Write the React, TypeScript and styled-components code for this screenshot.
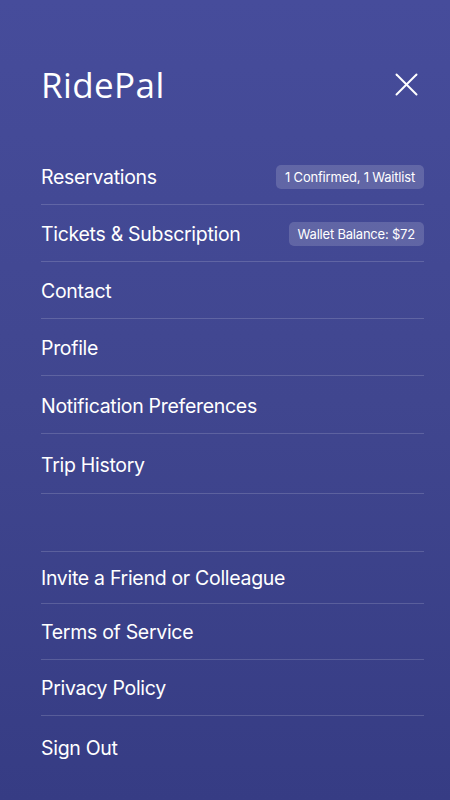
import React from "react";
import styled, { createGlobalStyle } from "styled-components";

const GlobalStyle = createGlobalStyle`
  html, body { margin: 0; padding: 0; }
  body { font-family: Inter, "Noto Sans", sans-serif; -webkit-font-smoothing: antialiased; }
`;

const Page = styled.div`
  width: 450px;
  min-height: 800px;
  box-sizing: border-box;
  padding: 62px 26px 0 41px;
  background: linear-gradient(180deg, #464c9b 0%, #40468f 50%, #363c84 100%);
  color: #fff;
  display: flex;
  flex-direction: column;
`;

const Header = styled.header`
  height: 44px;
  display: flex;
  align-items: center;
  justify-content: space-between;
  margin-bottom: 42px;
`;

const Title = styled.h1`
  margin: 0;
  font-family: "Open Sans", Roboto, sans-serif;
  font-weight: 400;
  font-size: 35px;
  letter-spacing: 0.4px;
  line-height: 1;
`;

const CloseButton = styled.button`
  width: 30px;
  height: 30px;
  margin-right: 3px;
  padding: 0;
  border: 0;
  background: none;
  color: #fff;
  display: flex;
  align-items: center;
  justify-content: center;
`;

const Menu = styled.nav`
  display: flex;
  flex-direction: column;
`;

const Row = styled.div<{ $h: number; $offset?: number; $divider?: boolean }>`
  height: ${(p) => p.$h}px;
  box-sizing: border-box;
  padding-top: ${(p) => p.$offset ?? 0}px;
  display: flex;
  align-items: center;
  justify-content: space-between;
  border-bottom: ${(p) => (p.$divider === false ? "none" : "1px solid rgba(255,255,255,0.16)")};
`;

const Label = styled.span`
  font-size: 19.5px;
  font-weight: 400;
  letter-spacing: -0.3px;
`;

const Badge = styled.span`
  height: 24px;
  box-sizing: border-box;
  padding: 0 9px;
  border-radius: 5px;
  background: rgba(255, 255, 255, 0.16);
  font-size: 13px;
  letter-spacing: -0.2px;
  display: inline-flex;
  align-items: center;
`;

type Item = { label?: string; badge?: string; h: number; offset?: number; divider?: boolean };

const items: Item[] = [
  { label: "Reservations", badge: "1 Confirmed, 1 Waitlist", h: 57, offset: 2 },
  { label: "Tickets & Subscription", badge: "Wallet Balance: $72", h: 57, offset: 2 },
  { label: "Contact", h: 57, offset: 2 },
  { label: "Profile", h: 57, offset: 2 },
  { label: "Notification Preferences", h: 58, offset: 2 },
  { label: "Trip History", h: 60, offset: 2 },
  { h: 58 },
  { label: "Invite a Friend or Colleague", h: 52 },
  { label: "Terms of Service", h: 56 },
  { label: "Privacy Policy", h: 56 },
  { label: "Sign Out", h: 64, divider: false },
];

export default function App() {
  return (
    <>
      <GlobalStyle />
      <Page>
        <Header>
          <Title>RidePal</Title>
          <CloseButton aria-label="Close">
            <svg width="23" height="23" viewBox="0 0 23 23" fill="none" stroke="#fff" strokeWidth="2" strokeLinecap="round">
              <line x1="1.5" y1="1.5" x2="21.5" y2="21.5" />
              <line x1="21.5" y1="1.5" x2="1.5" y2="21.5" />
            </svg>
          </CloseButton>
        </Header>
        <Menu>
          {items.map((it, i) => (
            <Row key={i} $h={it.h} $offset={it.offset} $divider={it.divider}>
              {it.label && <Label>{it.label}</Label>}
              {it.badge && <Badge>{it.badge}</Badge>}
            </Row>
          ))}
        </Menu>
      </Page>
    </>
  );
}
